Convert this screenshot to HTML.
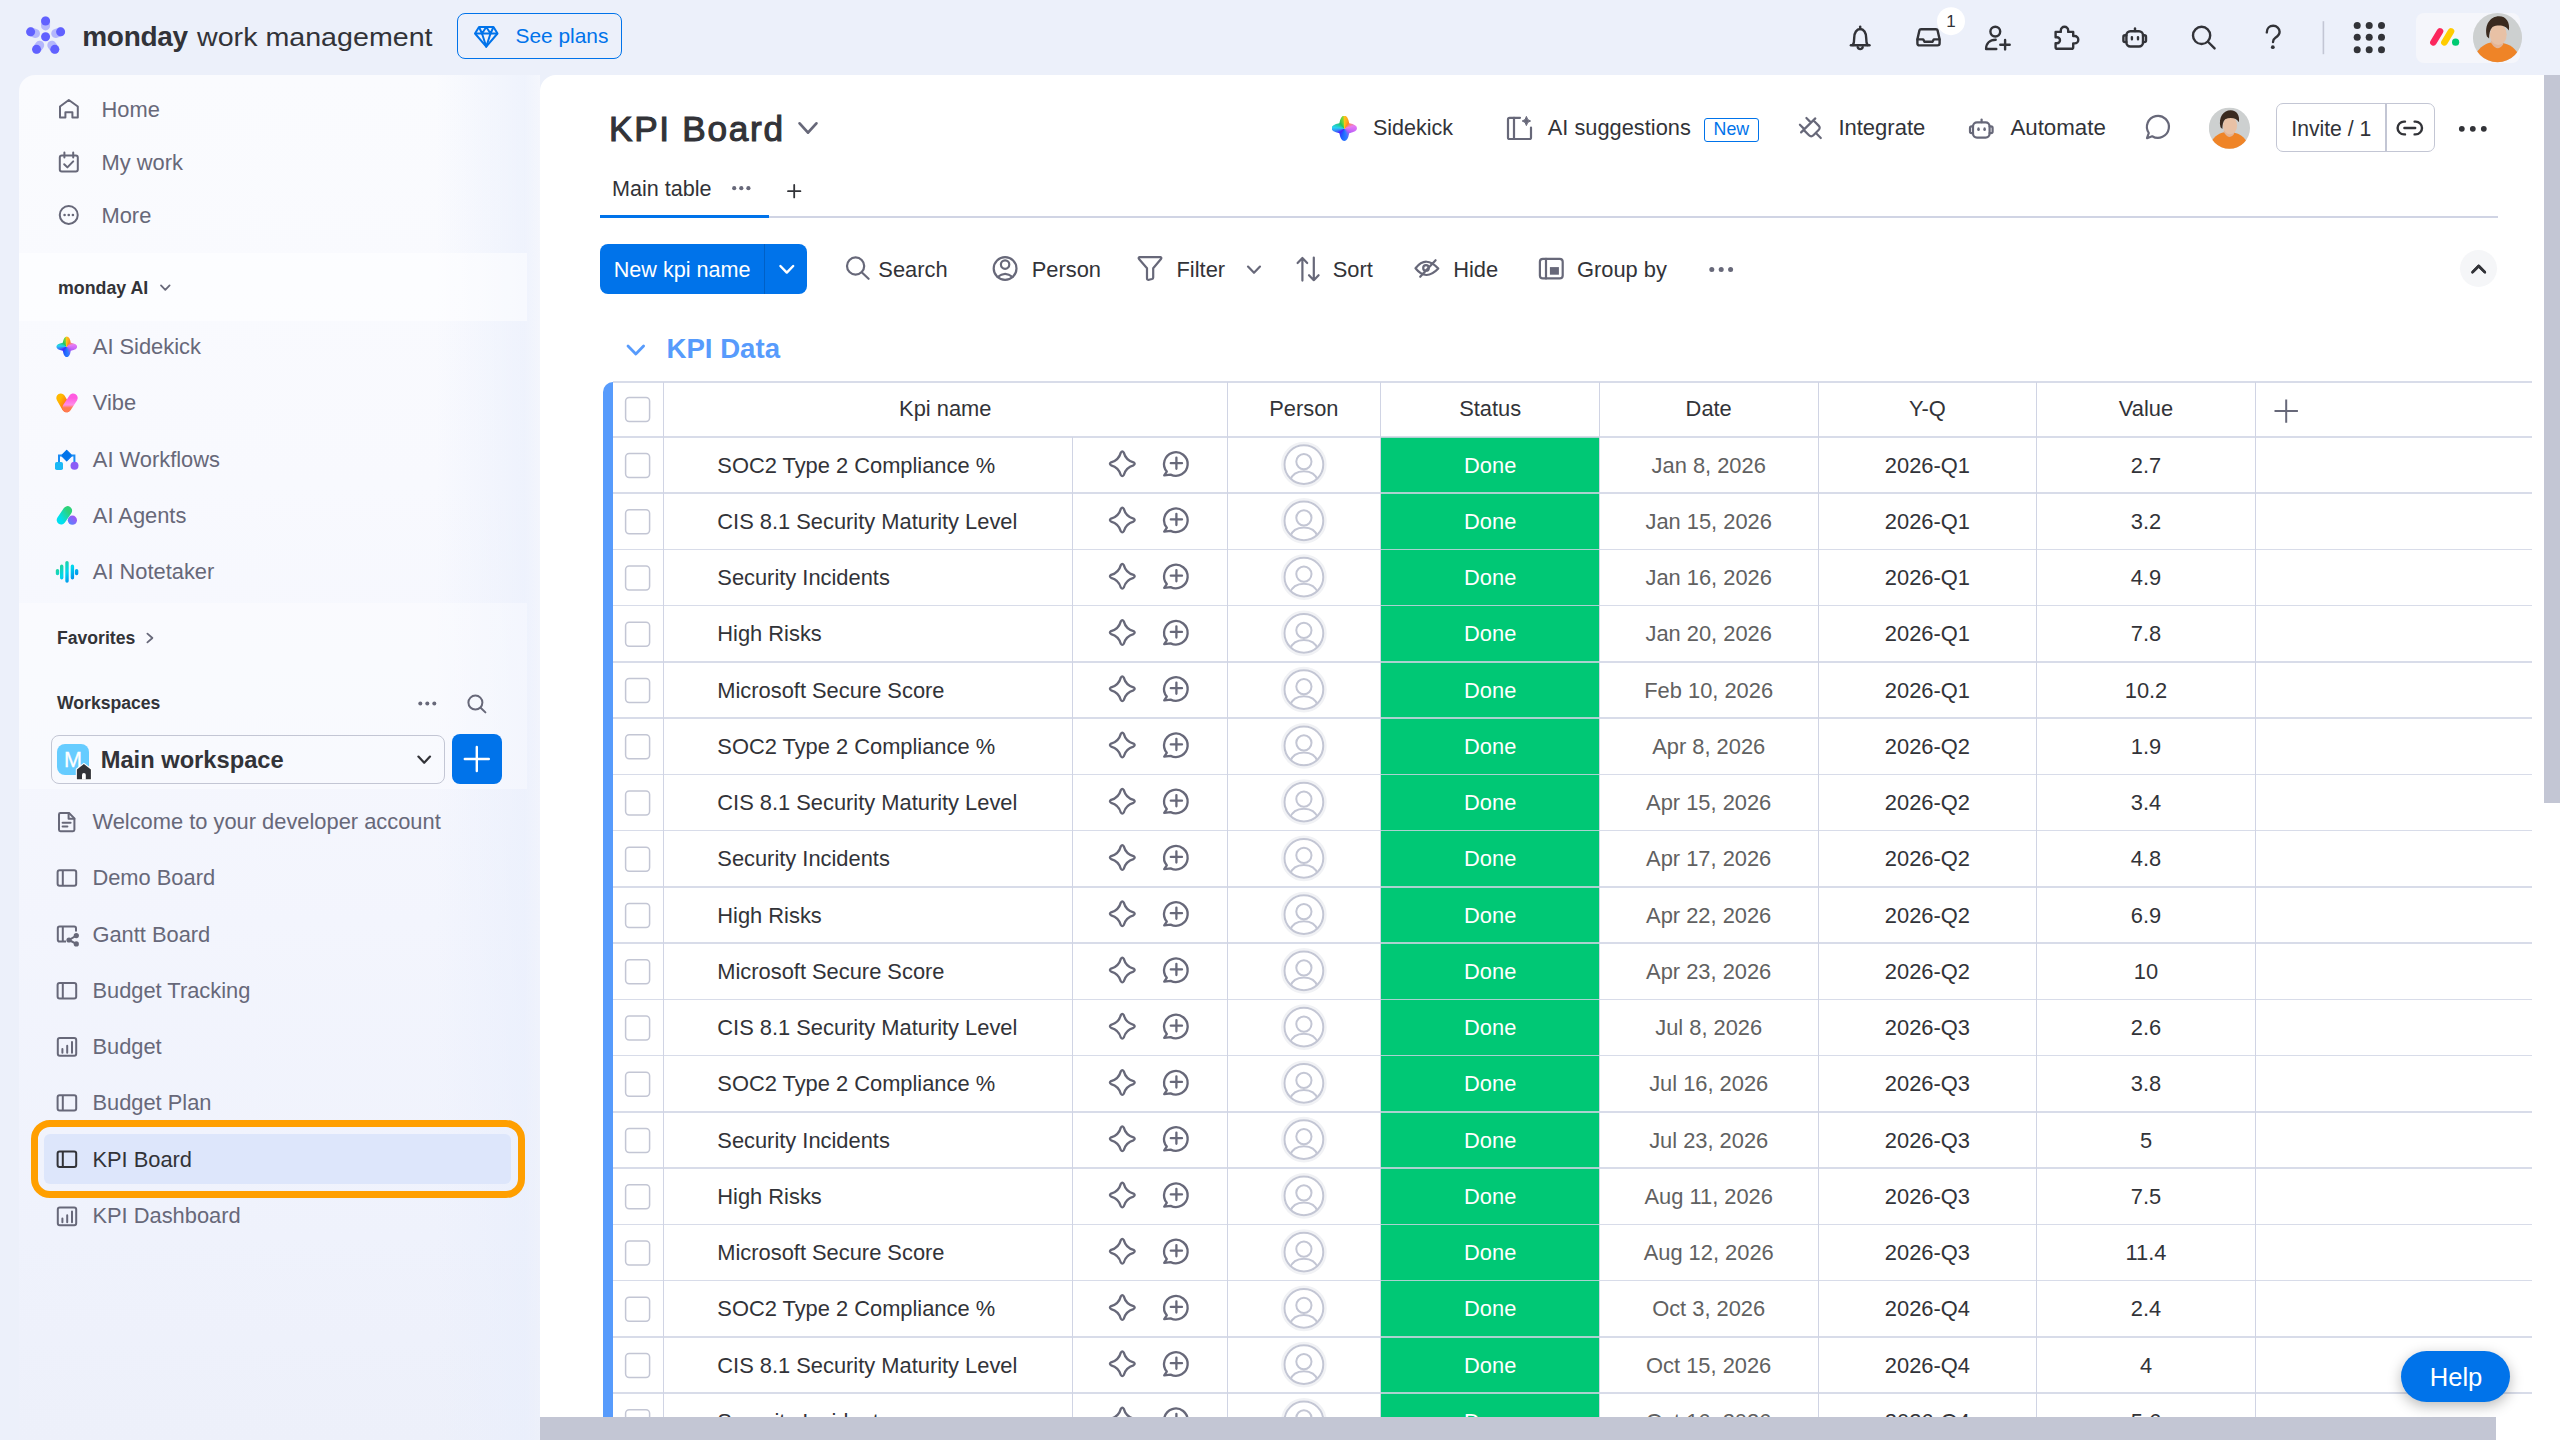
<!DOCTYPE html>
<html><head><meta charset="utf-8"><title>KPI Board</title>
<style>
*{margin:0;padding:0;box-sizing:border-box}
html,body{width:2560px;height:1440px;overflow:hidden}
body{background:#ECF0FA;font-family:"Liberation Sans",sans-serif;position:relative;color:#323338}
.a{position:absolute}
.t{position:absolute;white-space:nowrap;z-index:3}
#ov{position:absolute;left:0;top:0;z-index:4;overflow:visible}
</style></head><body>
<div class="a" style="left:19px;top:75px;width:521px;height:1365px;border-radius:16px 0 0 0;background:linear-gradient(90deg,rgba(236,240,250,0) 0%,rgba(236,240,250,0) 80%,rgba(232,238,252,0.6) 97%,rgba(236,240,250,0.4) 100%),linear-gradient(180deg,#FAFBFE 0%,#F8F9FE 30%,#F3F5FD 62%,#EFF2FC 85%,#EDF0FA 100%);"></div><div class="a" style="left:19px;top:252.5px;width:508px;height:68.5px;background:rgba(255,255,255,0.5);"></div><div class="a" style="left:19px;top:602.5px;width:508px;height:186px;background:rgba(255,255,255,0.35);"></div><div class="a" style="left:540px;top:75px;width:2020px;height:1365px;border-radius:16px 0 0 0;background:#FFFFFF;"></div><div class="t" style="top:23.00px;font-size:28px;line-height:28px;color:#323338;font-weight:700;left:82.25px;letter-spacing:-0.3px;">monday</div><div class="t" style="top:24.00px;font-size:26.4px;line-height:26.4px;color:#323338;left:197.00px;transform:scaleX(1.085);transform-origin:0 0;">work management</div><div class="a" style="left:457.4px;top:13.4px;width:164.4px;height:46px;border:1.7px solid #0073EA;border-radius:8px;"></div><div class="t" style="top:25.80px;font-size:20.9px;line-height:20.9px;color:#0073EA;left:515.50px;">See plans</div><div class="t" style="top:13.30px;font-size:17px;line-height:17px;color:#323338;left:1936.00px;width:30px;text-align:center;z-index:6;">1</div><div class="a" style="left:2416px;top:13px;width:104px;height:49.6px;border-radius:8px;background:#F5F6FB;"></div><div class="t" style="top:99.30px;font-size:21.875px;line-height:21.875px;color:#676879;left:101.50px;">Home</div><div class="t" style="top:152.30px;font-size:21.875px;line-height:21.875px;color:#676879;left:101.50px;">My work</div><div class="t" style="top:204.90px;font-size:21.875px;line-height:21.875px;color:#676879;left:101.50px;">More</div><div class="t" style="top:280.20px;font-size:17.8px;line-height:17.8px;color:#323338;font-weight:700;left:58.00px;">monday AI</div><div class="t" style="top:336.20px;font-size:21.875px;line-height:21.875px;color:#676879;left:92.80px;">AI Sidekick</div><div class="t" style="top:392.45px;font-size:21.875px;line-height:21.875px;color:#676879;left:92.80px;">Vibe</div><div class="t" style="top:448.70px;font-size:21.875px;line-height:21.875px;color:#676879;left:92.80px;">AI Workflows</div><div class="t" style="top:504.95px;font-size:21.875px;line-height:21.875px;color:#676879;left:92.80px;">AI Agents</div><div class="t" style="top:561.20px;font-size:21.875px;line-height:21.875px;color:#676879;left:92.80px;">AI Notetaker</div><div class="t" style="top:630.00px;font-size:17.6px;line-height:17.6px;color:#323338;font-weight:700;left:57.00px;">Favorites</div><div class="t" style="top:695.40px;font-size:17.6px;line-height:17.6px;color:#323338;font-weight:700;left:57.00px;">Workspaces</div><div class="a" style="left:50.5px;top:735.2px;width:394.5px;height:48.4px;border:1.6px solid #C3C6D4;border-radius:8px;"></div><div class="a" style="left:57.3px;top:744px;width:31.3px;height:30.8px;border-radius:8px;background:#66CCFF;"></div><div class="t" style="top:749.20px;font-size:21.6px;line-height:21.6px;color:#FFFFFF;left:53.10px;width:40px;text-align:center;-webkit-text-stroke:0.3px #fff;">M</div><div class="t" style="top:749.00px;font-size:23.7px;line-height:23.7px;color:#323338;font-weight:700;left:100.70px;">Main workspace</div><div class="a" style="left:451.9px;top:734.4px;width:49.8px;height:49.2px;border-radius:8px;background:#0073EA;"></div><div class="a" style="left:30.9px;top:1119.8px;width:494.1px;height:77.8px;border:7.7px solid #FF9F00;border-radius:19px;"></div><div class="a" style="left:43.9px;top:1134px;width:467.4px;height:50.2px;border-radius:6px;background:#DDE6FB;"></div><div class="t" style="top:811.00px;font-size:21.875px;line-height:21.875px;color:#676879;left:92.40px;">Welcome to your developer account</div><div class="t" style="top:867.25px;font-size:21.875px;line-height:21.875px;color:#676879;left:92.40px;">Demo Board</div><div class="t" style="top:923.50px;font-size:21.875px;line-height:21.875px;color:#676879;left:92.40px;">Gantt Board</div><div class="t" style="top:979.75px;font-size:21.875px;line-height:21.875px;color:#676879;left:92.40px;">Budget Tracking</div><div class="t" style="top:1036.00px;font-size:21.875px;line-height:21.875px;color:#676879;left:92.40px;">Budget</div><div class="t" style="top:1092.25px;font-size:21.875px;line-height:21.875px;color:#676879;left:92.40px;">Budget Plan</div><div class="t" style="top:1148.50px;font-size:21.875px;line-height:21.875px;color:#323338;left:92.40px;">KPI Board</div><div class="t" style="top:1204.75px;font-size:21.875px;line-height:21.875px;color:#676879;left:92.40px;">KPI Dashboard</div><div class="a" style="left:56.4px;top:336.4px;width:20.8px;height:20.8px;background:conic-gradient(from 0deg at 50% 50%,#FFC21A 0deg,#FF8A1F 35deg,#E77BF5 75deg,#B65CF7 125deg,#2A7BFF 170deg,#1F5BFF 200deg,#4B1FFF 230deg,#27D3F2 275deg,#21C25E 320deg,#7BD63A 350deg,#FFC21A 360deg);clip-path:url(#skc);z-index:5;"></div><div class="t" style="top:111.00px;font-size:35.2px;line-height:35.2px;color:#323338;left:609.00px;-webkit-text-stroke:1.1px #323338;letter-spacing:1.7px;">KPI Board</div><div class="a" style="left:1331.6px;top:115.6px;width:25.4px;height:25.4px;background:conic-gradient(from 0deg at 50% 50%,#FFC21A 0deg,#FF8A1F 35deg,#E77BF5 75deg,#B65CF7 125deg,#2A7BFF 170deg,#1F5BFF 200deg,#4B1FFF 230deg,#27D3F2 275deg,#21C25E 320deg,#7BD63A 350deg,#FFC21A 360deg);clip-path:url(#skc);z-index:5;"></div><div class="t" style="top:118.40px;font-size:21.5px;line-height:21.5px;color:#323338;left:1373.00px;">Sidekick</div><div class="t" style="top:117.40px;font-size:21.8px;line-height:21.8px;color:#323338;left:1547.80px;">AI suggestions</div><div class="a" style="left:1704px;top:117.5px;width:54.8px;height:24.2px;border:1.6px solid #0073EA;border-radius:3px;"></div><div class="t" style="top:121.20px;font-size:17.8px;line-height:17.8px;color:#0073EA;left:1701.40px;width:60px;text-align:center;">New</div><div class="t" style="top:117.40px;font-size:22.0px;line-height:22.0px;color:#323338;left:1838.40px;">Integrate</div><div class="t" style="top:117.40px;font-size:22.3px;line-height:22.3px;color:#323338;left:2010.40px;">Automate</div><div class="a" style="left:2276.25px;top:103.1px;width:158.5px;height:49.4px;border:1.6px solid #C3C6D4;border-radius:7px;"></div><div class="a" style="left:2385px;top:103.1px;width:1.6px;height:49.4px;background:#C3C6D4;"></div><div class="t" style="top:117.60px;font-size:21.2px;line-height:21.2px;color:#323338;left:2291.25px;">Invite / 1</div><div class="t" style="top:177.50px;font-size:21.6px;line-height:21.6px;color:#323338;left:612.00px;">Main table</div><div class="a" style="left:600px;top:216.4px;width:1897.5px;height:1.8px;background:#D0D4E4;"></div><div class="a" style="left:599.8px;top:215px;width:169.4px;height:3.2px;background:#0073EA;"></div><div class="a" style="left:599.9px;top:243.8px;width:207.4px;height:50px;border-radius:8px;background:#0073EA;"></div><div class="a" style="left:764px;top:243.8px;width:1.4px;height:50px;background:#0060C6;"></div><div class="t" style="top:258.60px;font-size:21.6px;line-height:21.6px;color:#FFFFFF;left:613.70px;">New kpi name</div><div class="t" style="top:259.40px;font-size:21.875px;line-height:21.875px;color:#323338;left:878.30px;">Search</div><div class="t" style="top:259.40px;font-size:21.875px;line-height:21.875px;color:#323338;left:1031.70px;">Person</div><div class="t" style="top:259.40px;font-size:21.875px;line-height:21.875px;color:#323338;left:1176.50px;">Filter</div><div class="t" style="top:259.40px;font-size:21.875px;line-height:21.875px;color:#323338;left:1332.70px;">Sort</div><div class="t" style="top:259.40px;font-size:21.875px;line-height:21.875px;color:#323338;left:1453.20px;">Hide</div><div class="t" style="top:259.40px;font-size:21.875px;line-height:21.875px;color:#323338;left:1577.00px;">Group by</div><div class="a" style="left:2460px;top:249.9px;width:37.4px;height:37.4px;border-radius:50%;background:#F5F6F8;"></div><div class="t" style="top:335.00px;font-size:27.6px;line-height:27.6px;color:#579BFC;font-weight:700;left:666.50px;">KPI Data</div><div class="a" style="left:1381px;top:436.8px;width:218.2px;height:56.25px;background:#00C875;"></div><div class="a" style="left:1381px;top:493.05px;width:218.2px;height:56.25px;background:#00C875;"></div><div class="a" style="left:1381px;top:549.3px;width:218.2px;height:56.25px;background:#00C875;"></div><div class="a" style="left:1381px;top:605.55px;width:218.2px;height:56.25px;background:#00C875;"></div><div class="a" style="left:1381px;top:661.8px;width:218.2px;height:56.25px;background:#00C875;"></div><div class="a" style="left:1381px;top:718.05px;width:218.2px;height:56.25px;background:#00C875;"></div><div class="a" style="left:1381px;top:774.3px;width:218.2px;height:56.25px;background:#00C875;"></div><div class="a" style="left:1381px;top:830.55px;width:218.2px;height:56.25px;background:#00C875;"></div><div class="a" style="left:1381px;top:886.8px;width:218.2px;height:56.25px;background:#00C875;"></div><div class="a" style="left:1381px;top:943.05px;width:218.2px;height:56.25px;background:#00C875;"></div><div class="a" style="left:1381px;top:999.3px;width:218.2px;height:56.25px;background:#00C875;"></div><div class="a" style="left:1381px;top:1055.55px;width:218.2px;height:56.25px;background:#00C875;"></div><div class="a" style="left:1381px;top:1111.8px;width:218.2px;height:56.25px;background:#00C875;"></div><div class="a" style="left:1381px;top:1168.05px;width:218.2px;height:56.25px;background:#00C875;"></div><div class="a" style="left:1381px;top:1224.3px;width:218.2px;height:56.25px;background:#00C875;"></div><div class="a" style="left:1381px;top:1280.55px;width:218.2px;height:56.25px;background:#00C875;"></div><div class="a" style="left:1381px;top:1336.8px;width:218.2px;height:56.25px;background:#00C875;"></div><div class="a" style="left:1381px;top:1393.05px;width:218.2px;height:56.25px;background:#00C875;"></div><div class="a" style="left:603px;top:381.9px;width:9.6px;height:1058.1px;border-radius:10px 0 0 0;background:#579BFC;"></div><div class="a" style="left:612.5px;top:381.1px;width:1919.5px;height:1.6px;background:rgba(208,212,228,0.82);"></div><div class="a" style="left:612.5px;top:436.0px;width:1919.5px;height:1.6px;background:rgba(208,212,228,0.82);"></div><div class="a" style="left:612.5px;top:492.25px;width:1919.5px;height:1.6px;background:rgba(208,212,228,0.82);"></div><div class="a" style="left:612.5px;top:548.5px;width:1919.5px;height:1.6px;background:rgba(208,212,228,0.82);"></div><div class="a" style="left:612.5px;top:604.75px;width:1919.5px;height:1.6px;background:rgba(208,212,228,0.82);"></div><div class="a" style="left:612.5px;top:661.0px;width:1919.5px;height:1.6px;background:rgba(208,212,228,0.82);"></div><div class="a" style="left:612.5px;top:717.25px;width:1919.5px;height:1.6px;background:rgba(208,212,228,0.82);"></div><div class="a" style="left:612.5px;top:773.5px;width:1919.5px;height:1.6px;background:rgba(208,212,228,0.82);"></div><div class="a" style="left:612.5px;top:829.75px;width:1919.5px;height:1.6px;background:rgba(208,212,228,0.82);"></div><div class="a" style="left:612.5px;top:886.0px;width:1919.5px;height:1.6px;background:rgba(208,212,228,0.82);"></div><div class="a" style="left:612.5px;top:942.25px;width:1919.5px;height:1.6px;background:rgba(208,212,228,0.82);"></div><div class="a" style="left:612.5px;top:998.5px;width:1919.5px;height:1.6px;background:rgba(208,212,228,0.82);"></div><div class="a" style="left:612.5px;top:1054.75px;width:1919.5px;height:1.6px;background:rgba(208,212,228,0.82);"></div><div class="a" style="left:612.5px;top:1111.0px;width:1919.5px;height:1.6px;background:rgba(208,212,228,0.82);"></div><div class="a" style="left:612.5px;top:1167.25px;width:1919.5px;height:1.6px;background:rgba(208,212,228,0.82);"></div><div class="a" style="left:612.5px;top:1223.5px;width:1919.5px;height:1.6px;background:rgba(208,212,228,0.82);"></div><div class="a" style="left:612.5px;top:1279.75px;width:1919.5px;height:1.6px;background:rgba(208,212,228,0.82);"></div><div class="a" style="left:612.5px;top:1336.0px;width:1919.5px;height:1.6px;background:rgba(208,212,228,0.82);"></div><div class="a" style="left:612.5px;top:1392.25px;width:1919.5px;height:1.6px;background:rgba(208,212,228,0.82);"></div><div class="a" style="left:662.5px;top:381.9px;width:1.2px;height:1058.1px;background:#D0D4E4;"></div><div class="a" style="left:1226.9px;top:381.9px;width:1.2px;height:1058.1px;background:#D0D4E4;"></div><div class="a" style="left:1379.6px;top:381.9px;width:1.2px;height:1058.1px;background:#D0D4E4;"></div><div class="a" style="left:1598.6px;top:381.9px;width:1.2px;height:1058.1px;background:#D0D4E4;"></div><div class="a" style="left:1817.6px;top:381.9px;width:1.2px;height:1058.1px;background:#D0D4E4;"></div><div class="a" style="left:2036.0px;top:381.9px;width:1.2px;height:1058.1px;background:#D0D4E4;"></div><div class="a" style="left:2254.7px;top:381.9px;width:1.2px;height:1058.1px;background:#D0D4E4;"></div><div class="a" style="left:1072.2px;top:436.8px;width:1.2px;height:1003.2px;background:#D0D4E4;"></div><div class="t" style="top:398.20px;font-size:21.875px;line-height:21.875px;color:#323338;left:795.30px;width:300px;text-align:center;">Kpi name</div><div class="t" style="top:398.20px;font-size:21.875px;line-height:21.875px;color:#323338;left:1228.90px;width:150px;text-align:center;">Person</div><div class="t" style="top:398.20px;font-size:21.875px;line-height:21.875px;color:#323338;left:1390.20px;width:200px;text-align:center;">Status</div><div class="t" style="top:398.20px;font-size:21.875px;line-height:21.875px;color:#323338;left:1608.70px;width:200px;text-align:center;">Date</div><div class="t" style="top:398.20px;font-size:21.875px;line-height:21.875px;color:#323338;left:1827.40px;width:200px;text-align:center;">Y-Q</div><div class="t" style="top:398.20px;font-size:21.875px;line-height:21.875px;color:#323338;left:2046.00px;width:200px;text-align:center;">Value</div><div class="t" style="top:454.65px;font-size:21.875px;line-height:21.875px;color:#323338;left:717.30px;">SOC2 Type 2 Compliance %</div><div class="t" style="top:454.65px;font-size:21.875px;line-height:21.875px;color:#FFFFFF;left:1390.20px;width:200px;text-align:center;">Done</div><div class="t" style="top:454.65px;font-size:21.875px;line-height:21.875px;color:#616161;left:1603.70px;width:210px;text-align:center;">Jan 8, 2026</div><div class="t" style="top:454.65px;font-size:21.875px;line-height:21.875px;color:#323338;left:1822.40px;width:210px;text-align:center;">2026-Q1</div><div class="t" style="top:454.65px;font-size:21.875px;line-height:21.875px;color:#323338;left:2041.00px;width:210px;text-align:center;">2.7</div><div class="t" style="top:510.90px;font-size:21.875px;line-height:21.875px;color:#323338;left:717.30px;">CIS 8.1 Security Maturity Level</div><div class="t" style="top:510.90px;font-size:21.875px;line-height:21.875px;color:#FFFFFF;left:1390.20px;width:200px;text-align:center;">Done</div><div class="t" style="top:510.90px;font-size:21.875px;line-height:21.875px;color:#616161;left:1603.70px;width:210px;text-align:center;">Jan 15, 2026</div><div class="t" style="top:510.90px;font-size:21.875px;line-height:21.875px;color:#323338;left:1822.40px;width:210px;text-align:center;">2026-Q1</div><div class="t" style="top:510.90px;font-size:21.875px;line-height:21.875px;color:#323338;left:2041.00px;width:210px;text-align:center;">3.2</div><div class="t" style="top:567.15px;font-size:21.875px;line-height:21.875px;color:#323338;left:717.30px;">Security Incidents</div><div class="t" style="top:567.15px;font-size:21.875px;line-height:21.875px;color:#FFFFFF;left:1390.20px;width:200px;text-align:center;">Done</div><div class="t" style="top:567.15px;font-size:21.875px;line-height:21.875px;color:#616161;left:1603.70px;width:210px;text-align:center;">Jan 16, 2026</div><div class="t" style="top:567.15px;font-size:21.875px;line-height:21.875px;color:#323338;left:1822.40px;width:210px;text-align:center;">2026-Q1</div><div class="t" style="top:567.15px;font-size:21.875px;line-height:21.875px;color:#323338;left:2041.00px;width:210px;text-align:center;">4.9</div><div class="t" style="top:623.40px;font-size:21.875px;line-height:21.875px;color:#323338;left:717.30px;">High Risks</div><div class="t" style="top:623.40px;font-size:21.875px;line-height:21.875px;color:#FFFFFF;left:1390.20px;width:200px;text-align:center;">Done</div><div class="t" style="top:623.40px;font-size:21.875px;line-height:21.875px;color:#616161;left:1603.70px;width:210px;text-align:center;">Jan 20, 2026</div><div class="t" style="top:623.40px;font-size:21.875px;line-height:21.875px;color:#323338;left:1822.40px;width:210px;text-align:center;">2026-Q1</div><div class="t" style="top:623.40px;font-size:21.875px;line-height:21.875px;color:#323338;left:2041.00px;width:210px;text-align:center;">7.8</div><div class="t" style="top:679.65px;font-size:21.875px;line-height:21.875px;color:#323338;left:717.30px;">Microsoft Secure Score</div><div class="t" style="top:679.65px;font-size:21.875px;line-height:21.875px;color:#FFFFFF;left:1390.20px;width:200px;text-align:center;">Done</div><div class="t" style="top:679.65px;font-size:21.875px;line-height:21.875px;color:#616161;left:1603.70px;width:210px;text-align:center;">Feb 10, 2026</div><div class="t" style="top:679.65px;font-size:21.875px;line-height:21.875px;color:#323338;left:1822.40px;width:210px;text-align:center;">2026-Q1</div><div class="t" style="top:679.65px;font-size:21.875px;line-height:21.875px;color:#323338;left:2041.00px;width:210px;text-align:center;">10.2</div><div class="t" style="top:735.90px;font-size:21.875px;line-height:21.875px;color:#323338;left:717.30px;">SOC2 Type 2 Compliance %</div><div class="t" style="top:735.90px;font-size:21.875px;line-height:21.875px;color:#FFFFFF;left:1390.20px;width:200px;text-align:center;">Done</div><div class="t" style="top:735.90px;font-size:21.875px;line-height:21.875px;color:#616161;left:1603.70px;width:210px;text-align:center;">Apr 8, 2026</div><div class="t" style="top:735.90px;font-size:21.875px;line-height:21.875px;color:#323338;left:1822.40px;width:210px;text-align:center;">2026-Q2</div><div class="t" style="top:735.90px;font-size:21.875px;line-height:21.875px;color:#323338;left:2041.00px;width:210px;text-align:center;">1.9</div><div class="t" style="top:792.15px;font-size:21.875px;line-height:21.875px;color:#323338;left:717.30px;">CIS 8.1 Security Maturity Level</div><div class="t" style="top:792.15px;font-size:21.875px;line-height:21.875px;color:#FFFFFF;left:1390.20px;width:200px;text-align:center;">Done</div><div class="t" style="top:792.15px;font-size:21.875px;line-height:21.875px;color:#616161;left:1603.70px;width:210px;text-align:center;">Apr 15, 2026</div><div class="t" style="top:792.15px;font-size:21.875px;line-height:21.875px;color:#323338;left:1822.40px;width:210px;text-align:center;">2026-Q2</div><div class="t" style="top:792.15px;font-size:21.875px;line-height:21.875px;color:#323338;left:2041.00px;width:210px;text-align:center;">3.4</div><div class="t" style="top:848.40px;font-size:21.875px;line-height:21.875px;color:#323338;left:717.30px;">Security Incidents</div><div class="t" style="top:848.40px;font-size:21.875px;line-height:21.875px;color:#FFFFFF;left:1390.20px;width:200px;text-align:center;">Done</div><div class="t" style="top:848.40px;font-size:21.875px;line-height:21.875px;color:#616161;left:1603.70px;width:210px;text-align:center;">Apr 17, 2026</div><div class="t" style="top:848.40px;font-size:21.875px;line-height:21.875px;color:#323338;left:1822.40px;width:210px;text-align:center;">2026-Q2</div><div class="t" style="top:848.40px;font-size:21.875px;line-height:21.875px;color:#323338;left:2041.00px;width:210px;text-align:center;">4.8</div><div class="t" style="top:904.65px;font-size:21.875px;line-height:21.875px;color:#323338;left:717.30px;">High Risks</div><div class="t" style="top:904.65px;font-size:21.875px;line-height:21.875px;color:#FFFFFF;left:1390.20px;width:200px;text-align:center;">Done</div><div class="t" style="top:904.65px;font-size:21.875px;line-height:21.875px;color:#616161;left:1603.70px;width:210px;text-align:center;">Apr 22, 2026</div><div class="t" style="top:904.65px;font-size:21.875px;line-height:21.875px;color:#323338;left:1822.40px;width:210px;text-align:center;">2026-Q2</div><div class="t" style="top:904.65px;font-size:21.875px;line-height:21.875px;color:#323338;left:2041.00px;width:210px;text-align:center;">6.9</div><div class="t" style="top:960.90px;font-size:21.875px;line-height:21.875px;color:#323338;left:717.30px;">Microsoft Secure Score</div><div class="t" style="top:960.90px;font-size:21.875px;line-height:21.875px;color:#FFFFFF;left:1390.20px;width:200px;text-align:center;">Done</div><div class="t" style="top:960.90px;font-size:21.875px;line-height:21.875px;color:#616161;left:1603.70px;width:210px;text-align:center;">Apr 23, 2026</div><div class="t" style="top:960.90px;font-size:21.875px;line-height:21.875px;color:#323338;left:1822.40px;width:210px;text-align:center;">2026-Q2</div><div class="t" style="top:960.90px;font-size:21.875px;line-height:21.875px;color:#323338;left:2041.00px;width:210px;text-align:center;">10</div><div class="t" style="top:1017.15px;font-size:21.875px;line-height:21.875px;color:#323338;left:717.30px;">CIS 8.1 Security Maturity Level</div><div class="t" style="top:1017.15px;font-size:21.875px;line-height:21.875px;color:#FFFFFF;left:1390.20px;width:200px;text-align:center;">Done</div><div class="t" style="top:1017.15px;font-size:21.875px;line-height:21.875px;color:#616161;left:1603.70px;width:210px;text-align:center;">Jul 8, 2026</div><div class="t" style="top:1017.15px;font-size:21.875px;line-height:21.875px;color:#323338;left:1822.40px;width:210px;text-align:center;">2026-Q3</div><div class="t" style="top:1017.15px;font-size:21.875px;line-height:21.875px;color:#323338;left:2041.00px;width:210px;text-align:center;">2.6</div><div class="t" style="top:1073.40px;font-size:21.875px;line-height:21.875px;color:#323338;left:717.30px;">SOC2 Type 2 Compliance %</div><div class="t" style="top:1073.40px;font-size:21.875px;line-height:21.875px;color:#FFFFFF;left:1390.20px;width:200px;text-align:center;">Done</div><div class="t" style="top:1073.40px;font-size:21.875px;line-height:21.875px;color:#616161;left:1603.70px;width:210px;text-align:center;">Jul 16, 2026</div><div class="t" style="top:1073.40px;font-size:21.875px;line-height:21.875px;color:#323338;left:1822.40px;width:210px;text-align:center;">2026-Q3</div><div class="t" style="top:1073.40px;font-size:21.875px;line-height:21.875px;color:#323338;left:2041.00px;width:210px;text-align:center;">3.8</div><div class="t" style="top:1129.65px;font-size:21.875px;line-height:21.875px;color:#323338;left:717.30px;">Security Incidents</div><div class="t" style="top:1129.65px;font-size:21.875px;line-height:21.875px;color:#FFFFFF;left:1390.20px;width:200px;text-align:center;">Done</div><div class="t" style="top:1129.65px;font-size:21.875px;line-height:21.875px;color:#616161;left:1603.70px;width:210px;text-align:center;">Jul 23, 2026</div><div class="t" style="top:1129.65px;font-size:21.875px;line-height:21.875px;color:#323338;left:1822.40px;width:210px;text-align:center;">2026-Q3</div><div class="t" style="top:1129.65px;font-size:21.875px;line-height:21.875px;color:#323338;left:2041.00px;width:210px;text-align:center;">5</div><div class="t" style="top:1185.90px;font-size:21.875px;line-height:21.875px;color:#323338;left:717.30px;">High Risks</div><div class="t" style="top:1185.90px;font-size:21.875px;line-height:21.875px;color:#FFFFFF;left:1390.20px;width:200px;text-align:center;">Done</div><div class="t" style="top:1185.90px;font-size:21.875px;line-height:21.875px;color:#616161;left:1603.70px;width:210px;text-align:center;">Aug 11, 2026</div><div class="t" style="top:1185.90px;font-size:21.875px;line-height:21.875px;color:#323338;left:1822.40px;width:210px;text-align:center;">2026-Q3</div><div class="t" style="top:1185.90px;font-size:21.875px;line-height:21.875px;color:#323338;left:2041.00px;width:210px;text-align:center;">7.5</div><div class="t" style="top:1242.15px;font-size:21.875px;line-height:21.875px;color:#323338;left:717.30px;">Microsoft Secure Score</div><div class="t" style="top:1242.15px;font-size:21.875px;line-height:21.875px;color:#FFFFFF;left:1390.20px;width:200px;text-align:center;">Done</div><div class="t" style="top:1242.15px;font-size:21.875px;line-height:21.875px;color:#616161;left:1603.70px;width:210px;text-align:center;">Aug 12, 2026</div><div class="t" style="top:1242.15px;font-size:21.875px;line-height:21.875px;color:#323338;left:1822.40px;width:210px;text-align:center;">2026-Q3</div><div class="t" style="top:1242.15px;font-size:21.875px;line-height:21.875px;color:#323338;left:2041.00px;width:210px;text-align:center;">11.4</div><div class="t" style="top:1298.40px;font-size:21.875px;line-height:21.875px;color:#323338;left:717.30px;">SOC2 Type 2 Compliance %</div><div class="t" style="top:1298.40px;font-size:21.875px;line-height:21.875px;color:#FFFFFF;left:1390.20px;width:200px;text-align:center;">Done</div><div class="t" style="top:1298.40px;font-size:21.875px;line-height:21.875px;color:#616161;left:1603.70px;width:210px;text-align:center;">Oct 3, 2026</div><div class="t" style="top:1298.40px;font-size:21.875px;line-height:21.875px;color:#323338;left:1822.40px;width:210px;text-align:center;">2026-Q4</div><div class="t" style="top:1298.40px;font-size:21.875px;line-height:21.875px;color:#323338;left:2041.00px;width:210px;text-align:center;">2.4</div><div class="t" style="top:1354.65px;font-size:21.875px;line-height:21.875px;color:#323338;left:717.30px;">CIS 8.1 Security Maturity Level</div><div class="t" style="top:1354.65px;font-size:21.875px;line-height:21.875px;color:#FFFFFF;left:1390.20px;width:200px;text-align:center;">Done</div><div class="t" style="top:1354.65px;font-size:21.875px;line-height:21.875px;color:#616161;left:1603.70px;width:210px;text-align:center;">Oct 15, 2026</div><div class="t" style="top:1354.65px;font-size:21.875px;line-height:21.875px;color:#323338;left:1822.40px;width:210px;text-align:center;">2026-Q4</div><div class="t" style="top:1354.65px;font-size:21.875px;line-height:21.875px;color:#323338;left:2041.00px;width:210px;text-align:center;">4</div><div class="t" style="top:1410.90px;font-size:21.875px;line-height:21.875px;color:#323338;left:717.30px;">Security Incidents</div><div class="t" style="top:1410.90px;font-size:21.875px;line-height:21.875px;color:#FFFFFF;left:1390.20px;width:200px;text-align:center;">Done</div><div class="t" style="top:1410.90px;font-size:21.875px;line-height:21.875px;color:#616161;left:1603.70px;width:210px;text-align:center;">Oct 16, 2026</div><div class="t" style="top:1410.90px;font-size:21.875px;line-height:21.875px;color:#323338;left:1822.40px;width:210px;text-align:center;">2026-Q4</div><div class="t" style="top:1410.90px;font-size:21.875px;line-height:21.875px;color:#323338;left:2041.00px;width:210px;text-align:center;">5.6</div><div class="a" style="left:540px;top:1417px;width:1956px;height:23px;background:#C3C6D4;z-index:20;"></div><div class="a" style="left:2544.2px;top:75px;width:15.8px;height:727.5px;background:#C3C6D4;z-index:20;"></div><div class="a" style="left:2400.6px;top:1351px;width:109.4px;height:51.4px;border-radius:26px;background:#0073EA;box-shadow:0 4px 14px rgba(0,0,0,0.28);z-index:21;"></div><div class="t" style="top:1364.80px;font-size:25.6px;line-height:25.6px;color:#FFFFFF;left:2429.70px;z-index:22;">Help</div>
<svg id="ov" width="2560" height="1440" viewBox="0 0 2560 1440">
<g fill="#6161FF"><line x1="45.56" y1="21" x2="45.56" y2="25.9" stroke="#6161FF" stroke-opacity="0.4" stroke-width="9" stroke-linecap="round"/><line x1="30.65" y1="31.84" x2="35.5" y2="33.5" stroke="#6161FF" stroke-opacity="0.4" stroke-width="9" stroke-linecap="round"/><line x1="60.6" y1="31.84" x2="55.7" y2="33.5" stroke="#6161FF" stroke-opacity="0.4" stroke-width="9" stroke-linecap="round"/><line x1="36.6" y1="49.35" x2="39.7" y2="45.2" stroke="#6161FF" stroke-opacity="0.4" stroke-width="9" stroke-linecap="round"/><line x1="54.8" y1="49.35" x2="51.8" y2="45.2" stroke="#6161FF" stroke-opacity="0.4" stroke-width="9" stroke-linecap="round"/><circle cx="45.56" cy="21" r="4.5"/><circle cx="30.65" cy="31.84" r="4.5"/><circle cx="60.6" cy="31.84" r="4.5"/><circle cx="36.6" cy="49.35" r="4.5"/><circle cx="54.8" cy="49.35" r="4.5"/><circle cx="45.56" cy="36.7" r="4.5"/></g><g transform="translate(474,26)" fill="none" stroke="#0073EA" stroke-width="2" stroke-linejoin="round"><path d="M5,1 H19.5 L23.5,7.5 L12.25,20.7 L1,7.5 Z"/><path d="M1,7.5 H23.5"/><path d="M8,7.5 L12.25,20.7 L16.5,7.5"/><path d="M5,1 L8,7.5 L12.25,1 L16.5,7.5 L19.5,1"/></g><g fill="none" stroke="#323338" stroke-width="2.4" stroke-linecap="round" stroke-linejoin="round"><g transform="translate(1849.7,25.4)"><path d="M3.2,19.6 C4.2,18 4.5,16 4.5,12.5 C4.5,7.2 7,3.6 10.5,3.6 C14,3.6 16.5,7.2 16.5,12.5 C16.5,16 16.8,18 17.8,19.6"/><path d="M1.2,19.9 H19.8"/><path d="M10.5,1.2 V3.6"/><path d="M8,21.8 A2.6,2.6 0 0 0 13,21.8"/></g><g transform="translate(1916,27.8)"><path d="M5,1.4 H20 Q21.2,1.4 21.6,2.6 L23.6,11.5 V15.5 Q23.6,17.6 21.5,17.6 H3.5 Q1.4,17.6 1.4,15.5 V11.5 L3.4,2.6 Q3.8,1.4 5,1.4 Z"/><path d="M1.6,11.6 H7.2 L8.6,14 H16.4 L17.8,11.6 H23.4"/></g><g transform="translate(1984.7,25.4)"><circle cx="10.6" cy="6.2" r="4.9"/><path d="M11.6,23.6 H1.4 C1.4,18.2 5,14.4 11,14.4"/><path d="M20.4,14.6 V24 M15.6,19.3 H25"/></g><g transform="translate(2053.6,25.4)"><path d="M2,6.5 H7.2 V5 A3.7,3.7 0 0 1 14.6,5 V6.5 H19.6 V10.6 H21 A3.7,3.7 0 0 1 21,18 H19.6 V21.8 Q19.6,23.4 18,23.4 H3.6 Q2,23.4 2,21.8 V17.8 H3.4 A3,3 0 0 0 3.4,11.8 H2 Z"/></g><g transform="translate(2122.5,27.5)"><path d="M12.5,0.9 V3.6"/><rect x="3.9" y="3.8" width="16.6" height="15.2" rx="4"/><path d="M3.9,7.8 H2.5 Q0.9,7.8 0.9,9.4 V13 Q0.9,14.6 2.5,14.6 H3.9 M20.5,7.8 H21.9 Q23.5,7.8 23.5,9.4 V13 Q23.5,14.6 21.9,14.6 H20.5"/><path d="M9.4,9.6 V11.8 M15.5,9.6 V11.8"/></g><circle cx="2201.6" cy="35.4" r="8.6"/><path d="M2208.2,42 L2214.6,48.4"/><path d="M2266.8,32.4 C2266.8,28.2 2269.6,25.8 2273.2,25.8 C2276.8,25.8 2279.6,28.4 2279.6,31.8 C2279.6,35 2277.6,36.4 2275.4,37.8 C2273.6,39 2273,40 2273,42"/></g><circle cx="2272.8" cy="47.2" r="1.9" fill="#323338"/><circle cx="1951" cy="21.2" r="14" fill="#FFFFFF"/><path d="M2323.4,21.2 V54.2" stroke="#C3C6D4" stroke-width="1.6"/><g fill="#323338"><circle cx="2357.2" cy="25.4" r="3.5"/><circle cx="2357.2" cy="37.3" r="3.5"/><circle cx="2357.2" cy="49.7" r="3.5"/><circle cx="2369.2" cy="25.4" r="3.5"/><circle cx="2369.2" cy="37.3" r="3.5"/><circle cx="2369.2" cy="49.7" r="3.5"/><circle cx="2381.5" cy="25.4" r="3.5"/><circle cx="2381.5" cy="37.3" r="3.5"/><circle cx="2381.5" cy="49.7" r="3.5"/></g><path d="M2433.4,42.4 L2440,31.4" stroke="#FB275D" stroke-width="6.6" stroke-linecap="round"/><path d="M2444.4,42.4 L2451,31.4" stroke="#FFCC00" stroke-width="6.6" stroke-linecap="round"/><circle cx="2455.6" cy="42.2" r="3.6" fill="#00CA72"/><clipPath id="av1"><circle cx="2497.5" cy="37.6" r="24.6"/></clipPath><g clip-path="url(#av1)"><rect x="2472.9" y="13.0" width="49.2" height="49.2" fill="#CDD0D0"/><path d="M2473.50,57.60 C2479.50,45.60 2487.50,43.00 2491.50,42.60 L2503.50,43.20 C2508.50,44.10 2516.50,47.60 2519.50,57.60 L2521.50,67.60 L2471.50,67.60 Z" fill="#EF8427"/><path d="M2490.50,40.60 L2491.50,43.60 Q2497.50,52.60 2503.10,44.60 L2503.50,40.60 Z" fill="#E3B497"/><ellipse cx="2498.30" cy="34.40" rx="8.40" ry="10.60" fill="#E8C1A5"/><path d="M2486.90,36.60 C2483.90,24.60 2490.50,16.20 2499.00,16.20 C2506.50,16.20 2510.10,22.60 2508.90,30.60 C2506.50,25.60 2498.50,24.00 2492.50,27.00 C2489.90,29.60 2489.10,33.60 2489.10,38.60 Z" fill="#3A2A1F"/></g><g fill="none" stroke="#676879" stroke-width="2" stroke-linejoin="round" stroke-linecap="round"><path d="M60,106.5 L68.8,100 L77.8,106.5 V117.6 H72.4 V112.2 H65.4 V117.6 H60 Z"/><rect x="59.8" y="155.4" width="18" height="16" rx="2"/><path d="M64.4,152.6 V157.6 M73.2,152.6 V157.6"/><path d="M64.2,164.2 L67.4,167.4 L73.2,161.4"/><circle cx="68.75" cy="214.95" r="9"/></g><g fill="#676879"><circle cx="64.6" cy="214.95" r="1.3"/><circle cx="68.75" cy="214.95" r="1.3"/><circle cx="72.9" cy="214.95" r="1.3"/></g><path d="M161,285.4 L165.3,289.8 L169.6,285.4" fill="none" stroke="#676879" stroke-width="1.8" stroke-linecap="round" stroke-linejoin="round"/><path d="M147.4,633.6 L152.4,638 L147.4,642.4" fill="none" stroke="#676879" stroke-width="1.8" stroke-linecap="round" stroke-linejoin="round"/><g fill="#676879"><circle cx="420.3" cy="703.6" r="2"/><circle cx="427.3" cy="703.6" r="2"/><circle cx="434.3" cy="703.6" r="2"/></g><g fill="none" stroke="#676879" stroke-width="2" stroke-linecap="round"><circle cx="475.4" cy="702.6" r="7"/><path d="M480.6,707.8 L485.4,712.4"/></g><path d="M76.9,779.2 V769.4 L83.9,764 L90.9,769.4 V779.2 Z" fill="#323338" stroke="#FFFFFF" stroke-width="2.2" stroke-linejoin="round" paint-order="stroke"/><path d="M82,779.6 V775 A1.9,1.9 0 0 1 85.8,775 V779.6 Z" fill="#FFFFFF"/><path d="M418.4,756.6 L424.2,762.8 L430,756.6" fill="none" stroke="#323338" stroke-width="2.2" stroke-linecap="round" stroke-linejoin="round"/><path d="M476.8,747 V771 M464.8,759 H488.8" stroke="#FFFFFF" stroke-width="2.4" stroke-linecap="round"/><g fill="none" stroke="#676879" stroke-width="2" stroke-linejoin="round" stroke-linecap="round"><path d="M59,814.4 Q59,813 60.4,813 H69 L74.4,818.4 V829.8 Q74.4,831.2 73,831.2 H60.4 Q59,831.2 59,829.8 Z"/><path d="M68.6,813 V818.8 H74.4"/><path d="M62.6,822.8 H70.6 M62.6,826.6 H67.4"/></g><g fill="none" stroke="#676879" stroke-width="2" stroke-linejoin="round"><rect x="57.6" y="870.3" width="18.6" height="15.4" rx="2"/><path d="M62.8,870.3 V885.7"/></g><g fill="none" stroke="#676879" stroke-width="2" stroke-linejoin="round"><path d="M66,941.6 H59.6 Q57.8,941.6 57.8,939.8 V928.4 Q57.8,926.6 59.6,926.6 H74.2 Q76,926.6 76,928.4 V931.6"/><path d="M62.8,926.6 V941.6"/><path d="M76.3,935.6 L69,940 L76.3,943.9"/></g><g fill="#676879"><circle cx="76.3" cy="935.6" r="2.6"/><circle cx="69" cy="940" r="2.6"/><circle cx="76.3" cy="943.9" r="2.6"/></g><g fill="none" stroke="#676879" stroke-width="2" stroke-linejoin="round"><rect x="57.6" y="983.0999999999999" width="18.6" height="15.4" rx="2"/><path d="M62.8,983.0999999999999 V998.5"/></g><g fill="none" stroke="#676879" stroke-width="2" stroke-linejoin="round" stroke-linecap="round"><rect x="57.8" y="1038.1" width="18.4" height="17.6" rx="2"/><path d="M62.4,1048.8999999999999 V1052.7 M67.2,1045.7 V1052.7 M72,1041.8999999999999 V1052.7"/></g><g fill="none" stroke="#676879" stroke-width="2" stroke-linejoin="round"><rect x="57.6" y="1095.2" width="18.6" height="15.4" rx="2"/><path d="M62.8,1095.2 V1110.6000000000001"/></g><g fill="none" stroke="#323338" stroke-width="2" stroke-linejoin="round"><rect x="57.6" y="1151.6" width="18.6" height="15.4" rx="2"/><path d="M62.8,1151.6 V1167.0"/></g><g fill="none" stroke="#676879" stroke-width="2" stroke-linejoin="round" stroke-linecap="round"><rect x="57.8" y="1207.6" width="18.4" height="17.6" rx="2"/><path d="M62.4,1218.3999999999999 V1222.2 M67.2,1215.2 V1222.2 M72,1211.3999999999999 V1222.2"/></g><defs><clipPath id="skc" clipPathUnits="objectBoundingBox"><ellipse cx="0.5" cy="0.5" rx="0.5" ry="0.21"/><ellipse cx="0.5" cy="0.5" rx="0.21" ry="0.5"/><circle cx="0.5" cy="0.5" r="0.27"/></clipPath></defs><defs><linearGradient id="vibeL" x1="0" y1="0" x2="1" y2="1"><stop offset="0" stop-color="#FFB800"/><stop offset="1" stop-color="#FF5A1F"/></linearGradient><linearGradient id="vibeR" x1="0" y1="0" x2="0" y2="1"><stop offset="0" stop-color="#FF5AE0"/><stop offset="0.7" stop-color="#FF8DE8"/><stop offset="1" stop-color="#FF7A50"/></linearGradient><linearGradient id="agentG" x1="0" y1="1" x2="1" y2="0"><stop offset="0" stop-color="#00E0F0"/><stop offset="1" stop-color="#2DD27A"/></linearGradient><linearGradient id="agentP" x1="0" y1="1" x2="1" y2="0"><stop offset="0" stop-color="#4A8CFF"/><stop offset="1" stop-color="#B24BF3"/></linearGradient><linearGradient id="noteG" x1="0" y1="0" x2="1" y2="1"><stop offset="0" stop-color="#2DD27A"/><stop offset="0.5" stop-color="#00D7F0"/><stop offset="1" stop-color="#0073EA"/></linearGradient></defs><path d="M60.8,398 L66.4,407.8" stroke="url(#vibeL)" stroke-width="9" stroke-linecap="round"/><path d="M73.2,398 L66.8,407.8" stroke="url(#vibeR)" stroke-width="9" stroke-linecap="round"/><path d="M66.7,450.4 L71.9,455.6 L66.7,460.8 L61.5,455.6 Z" fill="#0073EA" stroke="#0073EA" stroke-width="1.2" stroke-linejoin="round"/><path d="M62,455.6 H59 V462.5 M71.4,455.6 H74.4 V462.5" fill="none" stroke="#1A8CF5" stroke-width="2"/><rect x="55" y="462" width="8" height="8" rx="1.8" fill="#1AB8F5"/><circle cx="74.5" cy="465.8" r="4" fill="#8B5CF6"/><path d="M61.2,520 L67.6,510.6" stroke="url(#agentG)" stroke-width="9" stroke-linecap="round"/><circle cx="72.4" cy="520.2" r="4.6" fill="url(#agentP)"/><g stroke="url(#noteG)" stroke-width="3.4" stroke-linecap="round"><path d="M57.5,570.6 V573.6 M61.7,566.2 V577.8 M67,562.6 V581 M72.4,566.2 V577.8 M76.6,570.6 V573.6"/></g><path d="M799.6,123.4 L808,132.6 L816.4,123.4" fill="none" stroke="#676879" stroke-width="2.8" stroke-linecap="round" stroke-linejoin="round"/><g fill="none" stroke="#676879" stroke-width="2.2" stroke-linecap="round" stroke-linejoin="round"><path d="M1520,117.8 H1509.6 Q1508,117.8 1508,119.4 V137.4 Q1508,139 1509.6,139 H1529.4 Q1531,139 1531,137.4 V127.6"/><path d="M1514,117.8 V139"/><path d="M1801.1,132.4 L1815.3,118.4 M1806.4,118 L1811,122.6 M1799.9,124.7 L1804.3,129.1 M1804.4,130.6 L1809,135.2 Q1811.2,137.4 1813.4,135.2 L1818.6,130 Q1820.8,127.8 1818.6,125.6 L1813.8,120.8 M1816.6,133.8 L1820.8,138"/><g transform="translate(1969.1,118.6)"><path d="M12.5,0.9 V3.6"/><rect x="3.9" y="3.8" width="16.6" height="15.2" rx="4"/><path d="M3.9,7.8 H2.5 Q0.9,7.8 0.9,9.4 V13 Q0.9,14.6 2.5,14.6 H3.9 M20.5,7.8 H21.9 Q23.5,7.8 23.5,9.4 V13 Q23.5,14.6 21.9,14.6 H20.5"/></g><g fill="#676879" stroke="none"><ellipse cx="1978.5" cy="129.2" rx="1.3" ry="1.9"/><ellipse cx="1984.6" cy="129.2" rx="1.3" ry="1.9"/></g><path d="M2152.2,136.25 A11,11 0 1 0 2148.8,133 L2147,138.2 Z"/></g><path d="M1526.4,116.4 Q1527,120.4 1530.6,121 Q1527,121.6 1526.4,125.6 Q1525.8,121.6 1522.2,121 Q1525.8,120.4 1526.4,116.4 Z" fill="#676879" stroke="#676879" stroke-width="1" stroke-linejoin="round"/><clipPath id="av2"><circle cx="2229.4" cy="128.1" r="20.6"/></clipPath><g clip-path="url(#av2)"><rect x="2208.8" y="107.5" width="41.2" height="41.2" fill="#CDD0D0"/><path d="M2209.30,144.85 C2214.33,134.80 2221.03,132.62 2224.38,132.29 L2234.42,132.79 C2238.61,133.54 2245.31,136.47 2247.82,144.85 L2249.50,153.22 L2207.63,153.22 Z" fill="#EF8427"/><path d="M2223.54,130.61 L2224.38,133.12 Q2229.40,140.66 2234.09,133.96 L2234.42,130.61 Z" fill="#E3B497"/><ellipse cx="2230.07" cy="125.42" rx="7.03" ry="8.88" fill="#E8C1A5"/><path d="M2220.52,127.26 C2218.01,117.21 2223.54,110.18 2230.66,110.18 C2236.94,110.18 2239.95,115.54 2238.95,122.24 C2236.94,118.05 2230.24,116.71 2225.21,119.22 C2223.04,121.40 2222.37,124.75 2222.37,128.94 Z" fill="#3A2A1F"/></g><g fill="none" stroke="#323338" stroke-width="2.4" stroke-linecap="round"><path d="M2405,121.6 H2404 A6.4,6.4 0 0 0 2404,134.4 H2405"/><path d="M2414.6,121.6 H2415.6 A6.4,6.4 0 0 1 2415.6,134.4 H2414.6"/><path d="M2404.4,128 H2415.2"/></g><g fill="#323338"><circle cx="2461.8" cy="128.8" r="2.9"/><circle cx="2472.8" cy="128.8" r="2.9"/><circle cx="2483.8" cy="128.8" r="2.9"/></g><g fill="#676879"><circle cx="734.2" cy="188.2" r="2.1"/><circle cx="741.3" cy="188.2" r="2.1"/><circle cx="748.4" cy="188.2" r="2.1"/></g><path d="M794.2,185 V197.4 M788,191.2 H800.4" stroke="#323338" stroke-width="1.8" stroke-linecap="round"/><path d="M780.4,266 L786.8,272.6 L793.2,266" fill="none" stroke="#FFFFFF" stroke-width="2.4" stroke-linecap="round" stroke-linejoin="round"/><g fill="none" stroke="#676879" stroke-width="2.2" stroke-linecap="round" stroke-linejoin="round"><circle cx="855.6" cy="266" r="8.6"/><path d="M862.2,272.8 L868.6,278.8"/><circle cx="1005.1" cy="268.5" r="11.4"/><circle cx="1005.1" cy="264.6" r="4.2"/><path d="M997.6,277 Q1005.1,270.6 1012.6,277"/><path d="M1139.6,257.2 H1160.4 Q1162,257.4 1161,259 L1153.2,268.2 V277.4 Q1153.2,278.6 1152,279 L1149,279.8 Q1147,280 1147,278.6 V268.2 L1139,259 Q1138,257.4 1139.6,257.2 Z"/><path d="M1248,266.6 L1254,272.8 L1260,266.6"/><path d="M1302.4,280.6 V258 M1297.6,263 L1302.4,258 L1307.2,263"/><path d="M1313.8,257.6 V280.2 M1309,275.2 L1313.8,280.2 L1318.6,275.2"/><path d="M1415.5,268.3 Q1426,255 1438.3,268.6 Q1426,281.5 1415.5,268.3 Z"/><circle cx="1426" cy="267.9" r="2.8"/><path d="M1435.6,260.2 L1420.2,276.8"/><rect x="1539.9" y="258.8" width="22.8" height="19.6" rx="3"/><path d="M1546,258.8 V278.4"/><path d="M2472.6,272.2 L2478.7,266 L2484.8,272.2" stroke="#323338" stroke-width="2.6"/></g><rect x="1549.9" y="267.1" width="9" height="7.6" fill="#676879"/><g fill="#676879"><circle cx="1711.8" cy="269.5" r="2.5"/><circle cx="1721.2" cy="269.5" r="2.5"/><circle cx="1730.6" cy="269.5" r="2.5"/></g><path d="M2472.6,272.2 L2478.7,266 L2484.8,272.2" fill="none" stroke="#323338" stroke-width="2.6" stroke-linecap="round" stroke-linejoin="round"/><path d="M628,346 L635.8,354 L643.6,346" fill="none" stroke="#579BFC" stroke-width="2.8" stroke-linecap="round" stroke-linejoin="round"/><path d="M2286.2,400.4 V421.8 M2275.5,411.1 H2296.9" stroke="#676879" stroke-width="2" stroke-linecap="square"/><rect x="625.6" y="397.4" width="24" height="24" rx="3.6" fill="#FFFFFF" stroke="#C3C6D4" stroke-width="1.5"/><rect x="625.6" y="453.40" width="24" height="24" rx="3.6" fill="#FFFFFF" stroke="#C3C6D4" stroke-width="1.5"/><path transform="translate(1122.3,463.80)" d="M-1.5,-11.2 Q0,-13.6 1.5,-11.2 C3,-5.6 5.6,-3 11.2,-1.5 Q13.6,0 11.2,1.5 C5.6,3 3,5.6 1.5,11.2 Q0,13.6 -1.5,11.2 C-3,5.6 -5.6,3 -11.2,1.5 Q-13.6,0 -11.2,-1.5 C-5.6,-3 -3,-5.6 -1.5,-11.2 Z" fill="none" stroke="#676879" stroke-width="2.3" stroke-linejoin="round"/><g transform="translate(1176.4,463.20)" fill="none" stroke="#676879" stroke-width="2.3" stroke-linecap="round" stroke-linejoin="round"><path d="M-9.6,8.4 A11.8,11.8 0 1 1 -5.8,11.4 L-12.2,12.2 Z"/><path d="M0,-5.6 V5.6 M-5.6,0 H5.6"/></g><g transform="translate(1303.9,464.60)"><circle r="21.6" fill="none" stroke="#F1F2F5" stroke-width="2.4"/><clipPath id="pc0"><circle r="19.4"/></clipPath><circle r="19.4" fill="#FFFFFF" stroke="#C3C6D4" stroke-width="2"/><g clip-path="url(#pc0)" fill="none" stroke="#C3C6D4" stroke-width="2"><circle cx="0" cy="-3" r="7.6"/><path d="M-14,16 C-12,10 -7,6.6 0,6.6 C7,6.6 12,10 14,16"/></g></g><rect x="625.6" y="509.65" width="24" height="24" rx="3.6" fill="#FFFFFF" stroke="#C3C6D4" stroke-width="1.5"/><path transform="translate(1122.3,520.05)" d="M-1.5,-11.2 Q0,-13.6 1.5,-11.2 C3,-5.6 5.6,-3 11.2,-1.5 Q13.6,0 11.2,1.5 C5.6,3 3,5.6 1.5,11.2 Q0,13.6 -1.5,11.2 C-3,5.6 -5.6,3 -11.2,1.5 Q-13.6,0 -11.2,-1.5 C-5.6,-3 -3,-5.6 -1.5,-11.2 Z" fill="none" stroke="#676879" stroke-width="2.3" stroke-linejoin="round"/><g transform="translate(1176.4,519.45)" fill="none" stroke="#676879" stroke-width="2.3" stroke-linecap="round" stroke-linejoin="round"><path d="M-9.6,8.4 A11.8,11.8 0 1 1 -5.8,11.4 L-12.2,12.2 Z"/><path d="M0,-5.6 V5.6 M-5.6,0 H5.6"/></g><g transform="translate(1303.9,520.85)"><circle r="21.6" fill="none" stroke="#F1F2F5" stroke-width="2.4"/><clipPath id="pc1"><circle r="19.4"/></clipPath><circle r="19.4" fill="#FFFFFF" stroke="#C3C6D4" stroke-width="2"/><g clip-path="url(#pc1)" fill="none" stroke="#C3C6D4" stroke-width="2"><circle cx="0" cy="-3" r="7.6"/><path d="M-14,16 C-12,10 -7,6.6 0,6.6 C7,6.6 12,10 14,16"/></g></g><rect x="625.6" y="565.90" width="24" height="24" rx="3.6" fill="#FFFFFF" stroke="#C3C6D4" stroke-width="1.5"/><path transform="translate(1122.3,576.30)" d="M-1.5,-11.2 Q0,-13.6 1.5,-11.2 C3,-5.6 5.6,-3 11.2,-1.5 Q13.6,0 11.2,1.5 C5.6,3 3,5.6 1.5,11.2 Q0,13.6 -1.5,11.2 C-3,5.6 -5.6,3 -11.2,1.5 Q-13.6,0 -11.2,-1.5 C-5.6,-3 -3,-5.6 -1.5,-11.2 Z" fill="none" stroke="#676879" stroke-width="2.3" stroke-linejoin="round"/><g transform="translate(1176.4,575.70)" fill="none" stroke="#676879" stroke-width="2.3" stroke-linecap="round" stroke-linejoin="round"><path d="M-9.6,8.4 A11.8,11.8 0 1 1 -5.8,11.4 L-12.2,12.2 Z"/><path d="M0,-5.6 V5.6 M-5.6,0 H5.6"/></g><g transform="translate(1303.9,577.10)"><circle r="21.6" fill="none" stroke="#F1F2F5" stroke-width="2.4"/><clipPath id="pc2"><circle r="19.4"/></clipPath><circle r="19.4" fill="#FFFFFF" stroke="#C3C6D4" stroke-width="2"/><g clip-path="url(#pc2)" fill="none" stroke="#C3C6D4" stroke-width="2"><circle cx="0" cy="-3" r="7.6"/><path d="M-14,16 C-12,10 -7,6.6 0,6.6 C7,6.6 12,10 14,16"/></g></g><rect x="625.6" y="622.15" width="24" height="24" rx="3.6" fill="#FFFFFF" stroke="#C3C6D4" stroke-width="1.5"/><path transform="translate(1122.3,632.55)" d="M-1.5,-11.2 Q0,-13.6 1.5,-11.2 C3,-5.6 5.6,-3 11.2,-1.5 Q13.6,0 11.2,1.5 C5.6,3 3,5.6 1.5,11.2 Q0,13.6 -1.5,11.2 C-3,5.6 -5.6,3 -11.2,1.5 Q-13.6,0 -11.2,-1.5 C-5.6,-3 -3,-5.6 -1.5,-11.2 Z" fill="none" stroke="#676879" stroke-width="2.3" stroke-linejoin="round"/><g transform="translate(1176.4,631.95)" fill="none" stroke="#676879" stroke-width="2.3" stroke-linecap="round" stroke-linejoin="round"><path d="M-9.6,8.4 A11.8,11.8 0 1 1 -5.8,11.4 L-12.2,12.2 Z"/><path d="M0,-5.6 V5.6 M-5.6,0 H5.6"/></g><g transform="translate(1303.9,633.35)"><circle r="21.6" fill="none" stroke="#F1F2F5" stroke-width="2.4"/><clipPath id="pc3"><circle r="19.4"/></clipPath><circle r="19.4" fill="#FFFFFF" stroke="#C3C6D4" stroke-width="2"/><g clip-path="url(#pc3)" fill="none" stroke="#C3C6D4" stroke-width="2"><circle cx="0" cy="-3" r="7.6"/><path d="M-14,16 C-12,10 -7,6.6 0,6.6 C7,6.6 12,10 14,16"/></g></g><rect x="625.6" y="678.40" width="24" height="24" rx="3.6" fill="#FFFFFF" stroke="#C3C6D4" stroke-width="1.5"/><path transform="translate(1122.3,688.80)" d="M-1.5,-11.2 Q0,-13.6 1.5,-11.2 C3,-5.6 5.6,-3 11.2,-1.5 Q13.6,0 11.2,1.5 C5.6,3 3,5.6 1.5,11.2 Q0,13.6 -1.5,11.2 C-3,5.6 -5.6,3 -11.2,1.5 Q-13.6,0 -11.2,-1.5 C-5.6,-3 -3,-5.6 -1.5,-11.2 Z" fill="none" stroke="#676879" stroke-width="2.3" stroke-linejoin="round"/><g transform="translate(1176.4,688.20)" fill="none" stroke="#676879" stroke-width="2.3" stroke-linecap="round" stroke-linejoin="round"><path d="M-9.6,8.4 A11.8,11.8 0 1 1 -5.8,11.4 L-12.2,12.2 Z"/><path d="M0,-5.6 V5.6 M-5.6,0 H5.6"/></g><g transform="translate(1303.9,689.60)"><circle r="21.6" fill="none" stroke="#F1F2F5" stroke-width="2.4"/><clipPath id="pc4"><circle r="19.4"/></clipPath><circle r="19.4" fill="#FFFFFF" stroke="#C3C6D4" stroke-width="2"/><g clip-path="url(#pc4)" fill="none" stroke="#C3C6D4" stroke-width="2"><circle cx="0" cy="-3" r="7.6"/><path d="M-14,16 C-12,10 -7,6.6 0,6.6 C7,6.6 12,10 14,16"/></g></g><rect x="625.6" y="734.65" width="24" height="24" rx="3.6" fill="#FFFFFF" stroke="#C3C6D4" stroke-width="1.5"/><path transform="translate(1122.3,745.05)" d="M-1.5,-11.2 Q0,-13.6 1.5,-11.2 C3,-5.6 5.6,-3 11.2,-1.5 Q13.6,0 11.2,1.5 C5.6,3 3,5.6 1.5,11.2 Q0,13.6 -1.5,11.2 C-3,5.6 -5.6,3 -11.2,1.5 Q-13.6,0 -11.2,-1.5 C-5.6,-3 -3,-5.6 -1.5,-11.2 Z" fill="none" stroke="#676879" stroke-width="2.3" stroke-linejoin="round"/><g transform="translate(1176.4,744.45)" fill="none" stroke="#676879" stroke-width="2.3" stroke-linecap="round" stroke-linejoin="round"><path d="M-9.6,8.4 A11.8,11.8 0 1 1 -5.8,11.4 L-12.2,12.2 Z"/><path d="M0,-5.6 V5.6 M-5.6,0 H5.6"/></g><g transform="translate(1303.9,745.85)"><circle r="21.6" fill="none" stroke="#F1F2F5" stroke-width="2.4"/><clipPath id="pc5"><circle r="19.4"/></clipPath><circle r="19.4" fill="#FFFFFF" stroke="#C3C6D4" stroke-width="2"/><g clip-path="url(#pc5)" fill="none" stroke="#C3C6D4" stroke-width="2"><circle cx="0" cy="-3" r="7.6"/><path d="M-14,16 C-12,10 -7,6.6 0,6.6 C7,6.6 12,10 14,16"/></g></g><rect x="625.6" y="790.90" width="24" height="24" rx="3.6" fill="#FFFFFF" stroke="#C3C6D4" stroke-width="1.5"/><path transform="translate(1122.3,801.30)" d="M-1.5,-11.2 Q0,-13.6 1.5,-11.2 C3,-5.6 5.6,-3 11.2,-1.5 Q13.6,0 11.2,1.5 C5.6,3 3,5.6 1.5,11.2 Q0,13.6 -1.5,11.2 C-3,5.6 -5.6,3 -11.2,1.5 Q-13.6,0 -11.2,-1.5 C-5.6,-3 -3,-5.6 -1.5,-11.2 Z" fill="none" stroke="#676879" stroke-width="2.3" stroke-linejoin="round"/><g transform="translate(1176.4,800.70)" fill="none" stroke="#676879" stroke-width="2.3" stroke-linecap="round" stroke-linejoin="round"><path d="M-9.6,8.4 A11.8,11.8 0 1 1 -5.8,11.4 L-12.2,12.2 Z"/><path d="M0,-5.6 V5.6 M-5.6,0 H5.6"/></g><g transform="translate(1303.9,802.10)"><circle r="21.6" fill="none" stroke="#F1F2F5" stroke-width="2.4"/><clipPath id="pc6"><circle r="19.4"/></clipPath><circle r="19.4" fill="#FFFFFF" stroke="#C3C6D4" stroke-width="2"/><g clip-path="url(#pc6)" fill="none" stroke="#C3C6D4" stroke-width="2"><circle cx="0" cy="-3" r="7.6"/><path d="M-14,16 C-12,10 -7,6.6 0,6.6 C7,6.6 12,10 14,16"/></g></g><rect x="625.6" y="847.15" width="24" height="24" rx="3.6" fill="#FFFFFF" stroke="#C3C6D4" stroke-width="1.5"/><path transform="translate(1122.3,857.55)" d="M-1.5,-11.2 Q0,-13.6 1.5,-11.2 C3,-5.6 5.6,-3 11.2,-1.5 Q13.6,0 11.2,1.5 C5.6,3 3,5.6 1.5,11.2 Q0,13.6 -1.5,11.2 C-3,5.6 -5.6,3 -11.2,1.5 Q-13.6,0 -11.2,-1.5 C-5.6,-3 -3,-5.6 -1.5,-11.2 Z" fill="none" stroke="#676879" stroke-width="2.3" stroke-linejoin="round"/><g transform="translate(1176.4,856.95)" fill="none" stroke="#676879" stroke-width="2.3" stroke-linecap="round" stroke-linejoin="round"><path d="M-9.6,8.4 A11.8,11.8 0 1 1 -5.8,11.4 L-12.2,12.2 Z"/><path d="M0,-5.6 V5.6 M-5.6,0 H5.6"/></g><g transform="translate(1303.9,858.35)"><circle r="21.6" fill="none" stroke="#F1F2F5" stroke-width="2.4"/><clipPath id="pc7"><circle r="19.4"/></clipPath><circle r="19.4" fill="#FFFFFF" stroke="#C3C6D4" stroke-width="2"/><g clip-path="url(#pc7)" fill="none" stroke="#C3C6D4" stroke-width="2"><circle cx="0" cy="-3" r="7.6"/><path d="M-14,16 C-12,10 -7,6.6 0,6.6 C7,6.6 12,10 14,16"/></g></g><rect x="625.6" y="903.40" width="24" height="24" rx="3.6" fill="#FFFFFF" stroke="#C3C6D4" stroke-width="1.5"/><path transform="translate(1122.3,913.80)" d="M-1.5,-11.2 Q0,-13.6 1.5,-11.2 C3,-5.6 5.6,-3 11.2,-1.5 Q13.6,0 11.2,1.5 C5.6,3 3,5.6 1.5,11.2 Q0,13.6 -1.5,11.2 C-3,5.6 -5.6,3 -11.2,1.5 Q-13.6,0 -11.2,-1.5 C-5.6,-3 -3,-5.6 -1.5,-11.2 Z" fill="none" stroke="#676879" stroke-width="2.3" stroke-linejoin="round"/><g transform="translate(1176.4,913.20)" fill="none" stroke="#676879" stroke-width="2.3" stroke-linecap="round" stroke-linejoin="round"><path d="M-9.6,8.4 A11.8,11.8 0 1 1 -5.8,11.4 L-12.2,12.2 Z"/><path d="M0,-5.6 V5.6 M-5.6,0 H5.6"/></g><g transform="translate(1303.9,914.60)"><circle r="21.6" fill="none" stroke="#F1F2F5" stroke-width="2.4"/><clipPath id="pc8"><circle r="19.4"/></clipPath><circle r="19.4" fill="#FFFFFF" stroke="#C3C6D4" stroke-width="2"/><g clip-path="url(#pc8)" fill="none" stroke="#C3C6D4" stroke-width="2"><circle cx="0" cy="-3" r="7.6"/><path d="M-14,16 C-12,10 -7,6.6 0,6.6 C7,6.6 12,10 14,16"/></g></g><rect x="625.6" y="959.65" width="24" height="24" rx="3.6" fill="#FFFFFF" stroke="#C3C6D4" stroke-width="1.5"/><path transform="translate(1122.3,970.05)" d="M-1.5,-11.2 Q0,-13.6 1.5,-11.2 C3,-5.6 5.6,-3 11.2,-1.5 Q13.6,0 11.2,1.5 C5.6,3 3,5.6 1.5,11.2 Q0,13.6 -1.5,11.2 C-3,5.6 -5.6,3 -11.2,1.5 Q-13.6,0 -11.2,-1.5 C-5.6,-3 -3,-5.6 -1.5,-11.2 Z" fill="none" stroke="#676879" stroke-width="2.3" stroke-linejoin="round"/><g transform="translate(1176.4,969.45)" fill="none" stroke="#676879" stroke-width="2.3" stroke-linecap="round" stroke-linejoin="round"><path d="M-9.6,8.4 A11.8,11.8 0 1 1 -5.8,11.4 L-12.2,12.2 Z"/><path d="M0,-5.6 V5.6 M-5.6,0 H5.6"/></g><g transform="translate(1303.9,970.85)"><circle r="21.6" fill="none" stroke="#F1F2F5" stroke-width="2.4"/><clipPath id="pc9"><circle r="19.4"/></clipPath><circle r="19.4" fill="#FFFFFF" stroke="#C3C6D4" stroke-width="2"/><g clip-path="url(#pc9)" fill="none" stroke="#C3C6D4" stroke-width="2"><circle cx="0" cy="-3" r="7.6"/><path d="M-14,16 C-12,10 -7,6.6 0,6.6 C7,6.6 12,10 14,16"/></g></g><rect x="625.6" y="1015.90" width="24" height="24" rx="3.6" fill="#FFFFFF" stroke="#C3C6D4" stroke-width="1.5"/><path transform="translate(1122.3,1026.30)" d="M-1.5,-11.2 Q0,-13.6 1.5,-11.2 C3,-5.6 5.6,-3 11.2,-1.5 Q13.6,0 11.2,1.5 C5.6,3 3,5.6 1.5,11.2 Q0,13.6 -1.5,11.2 C-3,5.6 -5.6,3 -11.2,1.5 Q-13.6,0 -11.2,-1.5 C-5.6,-3 -3,-5.6 -1.5,-11.2 Z" fill="none" stroke="#676879" stroke-width="2.3" stroke-linejoin="round"/><g transform="translate(1176.4,1025.70)" fill="none" stroke="#676879" stroke-width="2.3" stroke-linecap="round" stroke-linejoin="round"><path d="M-9.6,8.4 A11.8,11.8 0 1 1 -5.8,11.4 L-12.2,12.2 Z"/><path d="M0,-5.6 V5.6 M-5.6,0 H5.6"/></g><g transform="translate(1303.9,1027.10)"><circle r="21.6" fill="none" stroke="#F1F2F5" stroke-width="2.4"/><clipPath id="pc10"><circle r="19.4"/></clipPath><circle r="19.4" fill="#FFFFFF" stroke="#C3C6D4" stroke-width="2"/><g clip-path="url(#pc10)" fill="none" stroke="#C3C6D4" stroke-width="2"><circle cx="0" cy="-3" r="7.6"/><path d="M-14,16 C-12,10 -7,6.6 0,6.6 C7,6.6 12,10 14,16"/></g></g><rect x="625.6" y="1072.15" width="24" height="24" rx="3.6" fill="#FFFFFF" stroke="#C3C6D4" stroke-width="1.5"/><path transform="translate(1122.3,1082.55)" d="M-1.5,-11.2 Q0,-13.6 1.5,-11.2 C3,-5.6 5.6,-3 11.2,-1.5 Q13.6,0 11.2,1.5 C5.6,3 3,5.6 1.5,11.2 Q0,13.6 -1.5,11.2 C-3,5.6 -5.6,3 -11.2,1.5 Q-13.6,0 -11.2,-1.5 C-5.6,-3 -3,-5.6 -1.5,-11.2 Z" fill="none" stroke="#676879" stroke-width="2.3" stroke-linejoin="round"/><g transform="translate(1176.4,1081.95)" fill="none" stroke="#676879" stroke-width="2.3" stroke-linecap="round" stroke-linejoin="round"><path d="M-9.6,8.4 A11.8,11.8 0 1 1 -5.8,11.4 L-12.2,12.2 Z"/><path d="M0,-5.6 V5.6 M-5.6,0 H5.6"/></g><g transform="translate(1303.9,1083.35)"><circle r="21.6" fill="none" stroke="#F1F2F5" stroke-width="2.4"/><clipPath id="pc11"><circle r="19.4"/></clipPath><circle r="19.4" fill="#FFFFFF" stroke="#C3C6D4" stroke-width="2"/><g clip-path="url(#pc11)" fill="none" stroke="#C3C6D4" stroke-width="2"><circle cx="0" cy="-3" r="7.6"/><path d="M-14,16 C-12,10 -7,6.6 0,6.6 C7,6.6 12,10 14,16"/></g></g><rect x="625.6" y="1128.40" width="24" height="24" rx="3.6" fill="#FFFFFF" stroke="#C3C6D4" stroke-width="1.5"/><path transform="translate(1122.3,1138.80)" d="M-1.5,-11.2 Q0,-13.6 1.5,-11.2 C3,-5.6 5.6,-3 11.2,-1.5 Q13.6,0 11.2,1.5 C5.6,3 3,5.6 1.5,11.2 Q0,13.6 -1.5,11.2 C-3,5.6 -5.6,3 -11.2,1.5 Q-13.6,0 -11.2,-1.5 C-5.6,-3 -3,-5.6 -1.5,-11.2 Z" fill="none" stroke="#676879" stroke-width="2.3" stroke-linejoin="round"/><g transform="translate(1176.4,1138.20)" fill="none" stroke="#676879" stroke-width="2.3" stroke-linecap="round" stroke-linejoin="round"><path d="M-9.6,8.4 A11.8,11.8 0 1 1 -5.8,11.4 L-12.2,12.2 Z"/><path d="M0,-5.6 V5.6 M-5.6,0 H5.6"/></g><g transform="translate(1303.9,1139.60)"><circle r="21.6" fill="none" stroke="#F1F2F5" stroke-width="2.4"/><clipPath id="pc12"><circle r="19.4"/></clipPath><circle r="19.4" fill="#FFFFFF" stroke="#C3C6D4" stroke-width="2"/><g clip-path="url(#pc12)" fill="none" stroke="#C3C6D4" stroke-width="2"><circle cx="0" cy="-3" r="7.6"/><path d="M-14,16 C-12,10 -7,6.6 0,6.6 C7,6.6 12,10 14,16"/></g></g><rect x="625.6" y="1184.65" width="24" height="24" rx="3.6" fill="#FFFFFF" stroke="#C3C6D4" stroke-width="1.5"/><path transform="translate(1122.3,1195.05)" d="M-1.5,-11.2 Q0,-13.6 1.5,-11.2 C3,-5.6 5.6,-3 11.2,-1.5 Q13.6,0 11.2,1.5 C5.6,3 3,5.6 1.5,11.2 Q0,13.6 -1.5,11.2 C-3,5.6 -5.6,3 -11.2,1.5 Q-13.6,0 -11.2,-1.5 C-5.6,-3 -3,-5.6 -1.5,-11.2 Z" fill="none" stroke="#676879" stroke-width="2.3" stroke-linejoin="round"/><g transform="translate(1176.4,1194.45)" fill="none" stroke="#676879" stroke-width="2.3" stroke-linecap="round" stroke-linejoin="round"><path d="M-9.6,8.4 A11.8,11.8 0 1 1 -5.8,11.4 L-12.2,12.2 Z"/><path d="M0,-5.6 V5.6 M-5.6,0 H5.6"/></g><g transform="translate(1303.9,1195.85)"><circle r="21.6" fill="none" stroke="#F1F2F5" stroke-width="2.4"/><clipPath id="pc13"><circle r="19.4"/></clipPath><circle r="19.4" fill="#FFFFFF" stroke="#C3C6D4" stroke-width="2"/><g clip-path="url(#pc13)" fill="none" stroke="#C3C6D4" stroke-width="2"><circle cx="0" cy="-3" r="7.6"/><path d="M-14,16 C-12,10 -7,6.6 0,6.6 C7,6.6 12,10 14,16"/></g></g><rect x="625.6" y="1240.90" width="24" height="24" rx="3.6" fill="#FFFFFF" stroke="#C3C6D4" stroke-width="1.5"/><path transform="translate(1122.3,1251.30)" d="M-1.5,-11.2 Q0,-13.6 1.5,-11.2 C3,-5.6 5.6,-3 11.2,-1.5 Q13.6,0 11.2,1.5 C5.6,3 3,5.6 1.5,11.2 Q0,13.6 -1.5,11.2 C-3,5.6 -5.6,3 -11.2,1.5 Q-13.6,0 -11.2,-1.5 C-5.6,-3 -3,-5.6 -1.5,-11.2 Z" fill="none" stroke="#676879" stroke-width="2.3" stroke-linejoin="round"/><g transform="translate(1176.4,1250.70)" fill="none" stroke="#676879" stroke-width="2.3" stroke-linecap="round" stroke-linejoin="round"><path d="M-9.6,8.4 A11.8,11.8 0 1 1 -5.8,11.4 L-12.2,12.2 Z"/><path d="M0,-5.6 V5.6 M-5.6,0 H5.6"/></g><g transform="translate(1303.9,1252.10)"><circle r="21.6" fill="none" stroke="#F1F2F5" stroke-width="2.4"/><clipPath id="pc14"><circle r="19.4"/></clipPath><circle r="19.4" fill="#FFFFFF" stroke="#C3C6D4" stroke-width="2"/><g clip-path="url(#pc14)" fill="none" stroke="#C3C6D4" stroke-width="2"><circle cx="0" cy="-3" r="7.6"/><path d="M-14,16 C-12,10 -7,6.6 0,6.6 C7,6.6 12,10 14,16"/></g></g><rect x="625.6" y="1297.15" width="24" height="24" rx="3.6" fill="#FFFFFF" stroke="#C3C6D4" stroke-width="1.5"/><path transform="translate(1122.3,1307.55)" d="M-1.5,-11.2 Q0,-13.6 1.5,-11.2 C3,-5.6 5.6,-3 11.2,-1.5 Q13.6,0 11.2,1.5 C5.6,3 3,5.6 1.5,11.2 Q0,13.6 -1.5,11.2 C-3,5.6 -5.6,3 -11.2,1.5 Q-13.6,0 -11.2,-1.5 C-5.6,-3 -3,-5.6 -1.5,-11.2 Z" fill="none" stroke="#676879" stroke-width="2.3" stroke-linejoin="round"/><g transform="translate(1176.4,1306.95)" fill="none" stroke="#676879" stroke-width="2.3" stroke-linecap="round" stroke-linejoin="round"><path d="M-9.6,8.4 A11.8,11.8 0 1 1 -5.8,11.4 L-12.2,12.2 Z"/><path d="M0,-5.6 V5.6 M-5.6,0 H5.6"/></g><g transform="translate(1303.9,1308.35)"><circle r="21.6" fill="none" stroke="#F1F2F5" stroke-width="2.4"/><clipPath id="pc15"><circle r="19.4"/></clipPath><circle r="19.4" fill="#FFFFFF" stroke="#C3C6D4" stroke-width="2"/><g clip-path="url(#pc15)" fill="none" stroke="#C3C6D4" stroke-width="2"><circle cx="0" cy="-3" r="7.6"/><path d="M-14,16 C-12,10 -7,6.6 0,6.6 C7,6.6 12,10 14,16"/></g></g><rect x="625.6" y="1353.40" width="24" height="24" rx="3.6" fill="#FFFFFF" stroke="#C3C6D4" stroke-width="1.5"/><path transform="translate(1122.3,1363.80)" d="M-1.5,-11.2 Q0,-13.6 1.5,-11.2 C3,-5.6 5.6,-3 11.2,-1.5 Q13.6,0 11.2,1.5 C5.6,3 3,5.6 1.5,11.2 Q0,13.6 -1.5,11.2 C-3,5.6 -5.6,3 -11.2,1.5 Q-13.6,0 -11.2,-1.5 C-5.6,-3 -3,-5.6 -1.5,-11.2 Z" fill="none" stroke="#676879" stroke-width="2.3" stroke-linejoin="round"/><g transform="translate(1176.4,1363.20)" fill="none" stroke="#676879" stroke-width="2.3" stroke-linecap="round" stroke-linejoin="round"><path d="M-9.6,8.4 A11.8,11.8 0 1 1 -5.8,11.4 L-12.2,12.2 Z"/><path d="M0,-5.6 V5.6 M-5.6,0 H5.6"/></g><g transform="translate(1303.9,1364.60)"><circle r="21.6" fill="none" stroke="#F1F2F5" stroke-width="2.4"/><clipPath id="pc16"><circle r="19.4"/></clipPath><circle r="19.4" fill="#FFFFFF" stroke="#C3C6D4" stroke-width="2"/><g clip-path="url(#pc16)" fill="none" stroke="#C3C6D4" stroke-width="2"><circle cx="0" cy="-3" r="7.6"/><path d="M-14,16 C-12,10 -7,6.6 0,6.6 C7,6.6 12,10 14,16"/></g></g><rect x="625.6" y="1409.65" width="24" height="24" rx="3.6" fill="#FFFFFF" stroke="#C3C6D4" stroke-width="1.5"/><path transform="translate(1122.3,1420.05)" d="M-1.5,-11.2 Q0,-13.6 1.5,-11.2 C3,-5.6 5.6,-3 11.2,-1.5 Q13.6,0 11.2,1.5 C5.6,3 3,5.6 1.5,11.2 Q0,13.6 -1.5,11.2 C-3,5.6 -5.6,3 -11.2,1.5 Q-13.6,0 -11.2,-1.5 C-5.6,-3 -3,-5.6 -1.5,-11.2 Z" fill="none" stroke="#676879" stroke-width="2.3" stroke-linejoin="round"/><g transform="translate(1176.4,1419.45)" fill="none" stroke="#676879" stroke-width="2.3" stroke-linecap="round" stroke-linejoin="round"><path d="M-9.6,8.4 A11.8,11.8 0 1 1 -5.8,11.4 L-12.2,12.2 Z"/><path d="M0,-5.6 V5.6 M-5.6,0 H5.6"/></g><g transform="translate(1303.9,1420.85)"><circle r="21.6" fill="none" stroke="#F1F2F5" stroke-width="2.4"/><clipPath id="pc17"><circle r="19.4"/></clipPath><circle r="19.4" fill="#FFFFFF" stroke="#C3C6D4" stroke-width="2"/><g clip-path="url(#pc17)" fill="none" stroke="#C3C6D4" stroke-width="2"><circle cx="0" cy="-3" r="7.6"/><path d="M-14,16 C-12,10 -7,6.6 0,6.6 C7,6.6 12,10 14,16"/></g></g>
</svg>
</body></html>
